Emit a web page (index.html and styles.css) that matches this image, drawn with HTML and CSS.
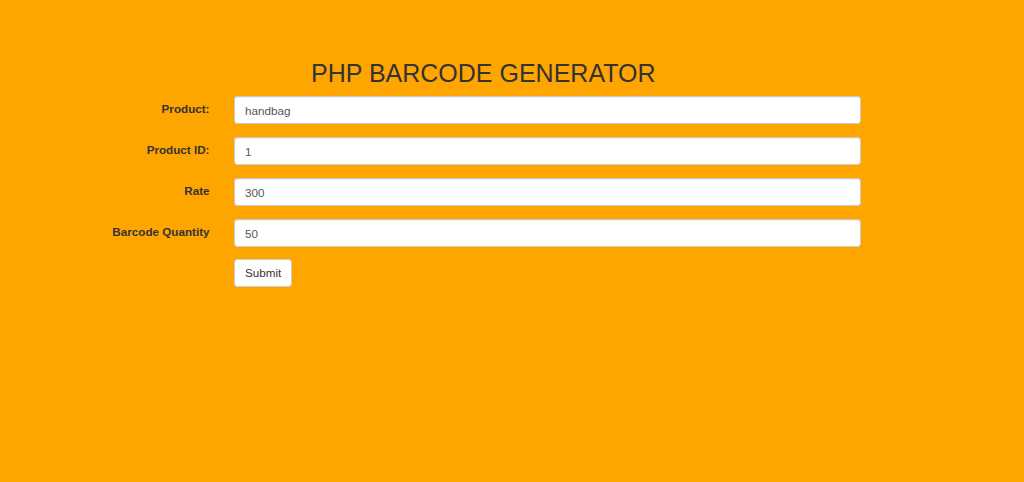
FILE: index.html
```html
<!DOCTYPE html>
<html lang="en">
<head>
<meta charset="utf-8">
<title>PHP Barcode Generator</title>
<link rel="stylesheet" href="styles.css">
</head>
<body>
<div class="page">
  <h2 class="title">PHP BARCODE GENERATOR</h2>
  <form class="form">
    <div class="row">
      <label class="label" for="product">Product:</label>
      <input class="input" id="product" type="text" value="handbag">
    </div>
    <div class="row">
      <label class="label" for="pid">Product ID:</label>
      <input class="input" id="pid" type="text" value="1">
    </div>
    <div class="row">
      <label class="label" for="rate">Rate</label>
      <input class="input" id="rate" type="text" value="300">
    </div>
    <div class="row">
      <label class="label" for="qty">Barcode Quantity</label>
      <input class="input" id="qty" type="text" value="50">
    </div>
    <div class="row">
      <span class="label"></span>
      <button class="btn" type="button">Submit</button>
    </div>
  </form>
</div>
</body>
</html>
```

FILE: styles.css
```css
html, body {
  margin: 0;
  padding: 0;
  background: #FFA500;
}
body {
  font-family: "Liberation Sans", Arial, sans-serif;
  font-size: 11.67px;
  line-height: 16.67px;
  color: #333;
  height: 482px;
}
.page {
  padding-top: 60px;
}
.title {
  margin: 0 0 0 311px;
  font-size: 25px;
  line-height: 27px;
  font-weight: 400;
  color: #333;
}
.form {
  margin-top: 9px;
}
.row {
  display: flex;
  align-items: flex-start;
  gap: 24.5px;
  margin-bottom: 13px;
}
.label {
  width: 209.5px;
  flex: none;
  text-align: right;
  font-weight: 700;
  padding-top: 5px;
  box-sizing: border-box;
}
.input {
  width: 627px;
  height: 28px;
  box-sizing: border-box;
  padding: 5px 10px;
  border: 1px solid #ccc;
  border-radius: 3.3px;
  background: #fff;
  font-family: inherit;
  font-size: 11.67px;
  line-height: 16.67px;
  color: #555;
  box-shadow: inset 0 1px 1px rgba(0,0,0,.075);
  margin: 0;
}
.btn {
  height: 28px;
  box-sizing: border-box;
  padding: 5px 10px;
  border: 1px solid #ccc;
  border-radius: 3.3px;
  background: #fff;
  font-family: inherit;
  font-size: 11.67px;
  line-height: 16.67px;
  color: #333;
  margin: -1px 0 0 0;
}
```
